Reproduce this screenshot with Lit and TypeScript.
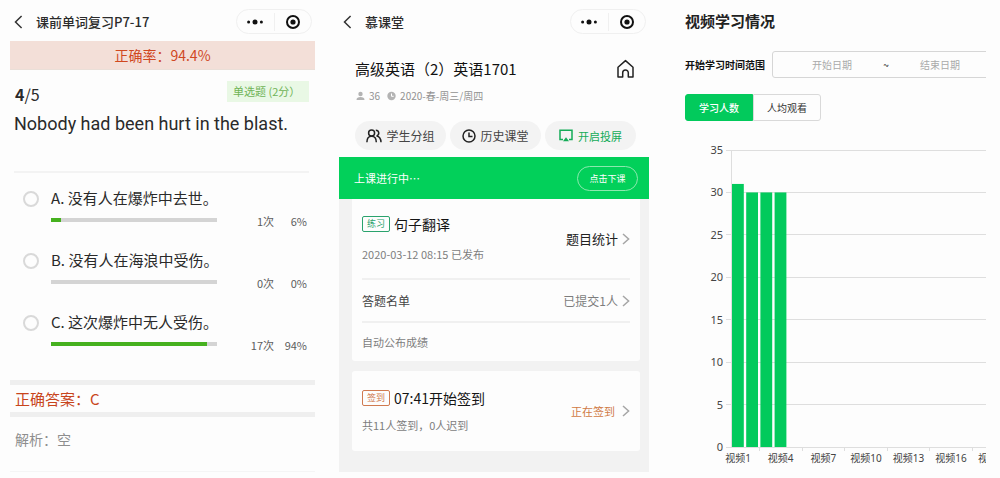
import { LitElement, html, svg, css } from "lit";
import { customElement, state, property } from "lit/decorators.js";
import { classMap } from "lit/directives/class-map.js";
import { styleMap } from "lit/directives/style-map.js";

const chevron = html`<svg class="chevron" width="8" height="12" viewBox="0 0 8 12" aria-hidden="true">
  <path d="M1 1l5.6 5L1 11" fill="none" stroke="#a6a6a6" stroke-width="1.5" />
</svg>`;

@customElement("phone-header")
class PhoneHeader extends LitElement {
  @property() heading = "";

  static styles = css`
    :host {
      display: flex;
      align-items: center;
      box-sizing: border-box;
      height: 41px;
      padding: 2px 3px 0 4px;
    }
    button {
      display: flex;
      align-items: center;
      justify-content: center;
      margin: 0;
      padding: 0;
      border: 0;
      background: none;
    }
    .back {
      width: 9px;
      height: 20px;
    }
    .heading {
      flex: 1;
      margin: 0;
      padding-left: 13px;
      font-size: 13px;
      line-height: 20px;
      font-weight: 500;
      color: #2b2b2b;
      white-space: nowrap;
    }
    .capsule {
      display: grid;
      grid-template-columns: 1fr 1px 1fr;
      align-items: center;
      box-sizing: border-box;
      width: 76px;
      height: 25px;
      border: 1px solid #f0f0f0;
      border-radius: 13px;
    }
    .split {
      height: 18px;
      background: #f0f0f0;
    }
  `;

  render() {
    return html`
      <button class="back" aria-label="返回">
        <svg width="9" height="14" viewBox="0 0 9 14">
          <path d="M7.6 1L1.5 7l6.1 6" fill="none" stroke="#333" stroke-width="1.5" />
        </svg>
      </button>
      <h1 class="heading">${this.heading}</h1>
      <div class="capsule">
        <button aria-label="更多">
          <svg width="18" height="8" viewBox="0 0 18 8" fill="#111">
            <circle cx="2.6" cy="4" r="1.5" />
            <circle cx="9" cy="4" r="2.5" />
            <circle cx="15.4" cy="4" r="1.5" />
          </svg>
        </button>
        <span class="split"></span>
        <button aria-label="关闭">
          <svg width="16" height="16" viewBox="0 0 16 16">
            <circle cx="8" cy="8" r="6" fill="none" stroke="#111" stroke-width="2" />
            <circle cx="8" cy="8" r="2.6" fill="#111" />
          </svg>
        </button>
      </div>
    `;
  }
}

interface Choice {
  key: string;
  text: string;
  count: number;
  percent: number;
}

@customElement("quiz-panel")
class QuizPanel extends LitElement {
  private choices: Choice[] = [
    { key: "A", text: "没有人在爆炸中去世。", count: 1, percent: 6 },
    { key: "B", text: "没有人在海浪中受伤。", count: 0, percent: 0 },
    { key: "C", text: "这次爆炸中无人受伤。", count: 17, percent: 94 },
  ];

  static styles = css`
    :host {
      display: block;
      color: #2a2a2a;
    }
    .rate {
      height: 28px;
      border-bottom: 1px solid #eadfd8;
      background: #f3dfd8;
      color: #d0481f;
      font-size: 14px;
      line-height: 28px;
      text-align: center;
    }
    .question {
      margin: 0 6px 0 4px;
      border-bottom: 2px solid #f3f3f3;
      padding: 11px 0 36px;
    }
    .top {
      display: flex;
      justify-content: space-between;
    }
    .index {
      padding-left: 1px;
      font-size: 16px;
      line-height: 26px;
    }
    .kind {
      box-sizing: border-box;
      width: 82px;
      height: 21px;
      padding-left: 6px;
      background: #e9f8e5;
      color: #6fb356;
      font-size: 11px;
      line-height: 21px;
      white-space: nowrap;
    }
    .sentence {
      margin: 6px 0 0;
      font-family: Roboto, "Noto Sans CJK SC", sans-serif;
      font-size: 18px;
      line-height: 22px;
      white-space: nowrap;
    }
    fieldset {
      margin: 0;
      padding: 14px 8px 7px 13px;
      border: 0;
      min-width: 0;
    }
    .choice {
      display: grid;
      grid-template-columns: 28px minmax(0, 166fr) minmax(0, 90fr);
      grid-template-rows: 22px 20px;
      height: 62px;
    }
    .choice input {
      appearance: none;
      box-sizing: border-box;
      width: 16px;
      height: 16px;
      margin: 4px 0;
      border: 2px solid #d9d9d9;
      border-radius: 50%;
    }
    .choice input:checked {
      border-color: #49ad22;
      background: #49ad22;
    }
    .choice label {
      grid-column: 2 / 4;
      font-size: 15px;
      line-height: 22px;
      white-space: nowrap;
    }
    .track {
      grid-column: 2;
      height: 4px;
      margin-top: 9px;
      background: #d4d4d4;
    }
    .fill {
      height: 100%;
      background: #46b11f;
    }
    .numbers {
      display: grid;
      grid-template-columns: 1fr 33px;
      padding-top: 2px;
      color: #5c5c5c;
      font-size: 11px;
      line-height: 20px;
      text-align: right;
      white-space: nowrap;
    }
    .answer {
      border: solid #efefef;
      border-width: 5px 0;
      padding: 0 5px;
      color: #c8451c;
      font-size: 15px;
      line-height: 27px;
    }
    .analysis {
      border-bottom: 1px solid #f5f5f5;
      padding: 11px 5px 21px;
      color: #8e8e8e;
      font-size: 14px;
      line-height: 22px;
    }
  `;

  render() {
    return html`
      <phone-header heading="课前单词复习P7-17"></phone-header>
      <div class="rate">正确率：94.4%</div>
      <div class="question">
        <div class="top">
          <span class="index"><b>4</b>/5</span>
          <span class="kind">单选题 (2分）</span>
        </div>
        <p class="sentence">Nobody had been hurt in the blast.</p>
      </div>
      <fieldset>
        ${this.choices.map(
          (c) => html`
            <div class="choice">
              <input type="radio" name="answer" id=${"choice-" + c.key} />
              <label for=${"choice-" + c.key}>${c.key}. ${c.text}</label>
              <div class="track">
                <div class="fill" style=${styleMap({ width: c.percent + "%" })}></div>
              </div>
              <div class="numbers"><span>${c.count}次</span><span>${c.percent}%</span></div>
            </div>
          `
        )}
      </fieldset>
      <div class="answer">正确答案：C</div>
      <div class="analysis">解析：空</div>
    `;
  }
}

@customElement("class-panel")
class ClassPanel extends LitElement {
  static styles = css`
    :host {
      display: block;
      color: #222;
      white-space: nowrap;
    }
    button {
      margin: 0;
      padding: 0;
      border: 0;
      background: none;
      color: inherit;
      font-family: inherit;
      white-space: nowrap;
    }
    .course {
      display: flex;
      align-items: center;
      justify-content: space-between;
      margin-top: 16px;
      padding: 0 14px 0 16px;
    }
    .course h2 {
      margin: 0;
      font-size: 15px;
      line-height: 24px;
      font-weight: 400;
      color: #111;
    }
    .home {
      display: flex;
    }
    .meta {
      display: flex;
      align-items: center;
      padding: 7px 16px 0 17px;
      color: #929292;
      font-size: 10px;
      line-height: 16px;
    }
    .meta span {
      margin: 0 7px 0 4px;
    }
    .actions {
      display: grid;
      grid-template-columns: repeat(3, minmax(0, 1fr));
      gap: 4px;
      padding: 17px 13px 7px 16px;
    }
    .action {
      display: flex;
      align-items: center;
      justify-content: center;
      gap: 4px;
      height: 29px;
      border-radius: 15px;
      background: #f3f3f3;
      font-size: 12px;
      color: #444;
    }
    .cast {
      gap: 5px;
      color: #14ac58;
      font-size: 11px;
    }
    .live {
      display: flex;
      align-items: center;
      justify-content: space-between;
      height: 42px;
      padding: 0 11px 0 15px;
      background: #02d05a;
      color: #fff;
      font-size: 11px;
    }
    .live button {
      width: 61px;
      height: 25px;
      border: 1px solid #8be9ae;
      border-radius: 13px;
      font-size: 9px;
    }
    .feed {
      display: grid;
      gap: 10px;
      padding: 0 9px 21px 13px;
      background: #f2f2f2;
    }
    .card {
      padding: 0 10px;
      border-radius: 3px;
      background: #fdfdfd;
    }
    .first {
      border-radius: 0 0 3px 3px;
    }
    .row {
      display: flex;
      align-items: center;
      justify-content: space-between;
    }
    .head {
      height: 79px;
    }
    .title {
      display: flex;
      align-items: center;
      gap: 4px;
      font-size: 14px;
      line-height: 24px;
    }
    .title h3 {
      margin: 0;
      font-size: 14px;
      font-weight: 400;
      color: #151515;
    }
    .tag {
      box-sizing: border-box;
      width: 28px;
      height: 16px;
      border: 1px solid #2aa36d;
      border-radius: 2px;
      color: #2aa36d;
      font-size: 9px;
      line-height: 14px;
      text-align: center;
    }
    .orange {
      border-color: #d07a50;
      color: #d07a50;
    }
    .note {
      margin: 7px 0 0;
      color: #7d7d7d;
      font-size: 11px;
      line-height: 22px;
    }
    .link {
      display: flex;
      align-items: center;
      gap: 4px;
      font-size: 12px;
    }
    .strong {
      font-size: 13px;
    }
    .sub {
      height: 41px;
      border-top: 2px solid #f0f0f0;
      font-size: 12px;
      color: #444;
    }
    .grey {
      color: #7d7d7d;
    }
    .last {
      height: 38px;
      color: #7d7d7d;
      font-size: 11px;
    }
    .sign {
      height: 80px;
    }
    .sign .note {
      margin-top: 4px;
    }
    .signing {
      gap: 7px;
      color: #d07a45;
      font-size: 11px;
    }
  `;

  render() {
    return html`
      <phone-header heading="慕课堂"></phone-header>
      <div class="course">
        <h2>高级英语（2）英语1701</h2>
        <button class="home" aria-label="主页">
          <svg width="19" height="20" viewBox="0 0 19 20">
            <path
              d="M2 8.2L9.5 1.6 17 8.2V18h-4.7v-4.2a2.8 2.8 0 0 0-5.6 0V18H2z"
              fill="none" stroke="#222" stroke-width="1.5" stroke-linejoin="round" />
          </svg>
        </button>
      </div>
      <div class="meta">
        <svg width="9" height="10" viewBox="0 0 9 10" fill="#b3b3b3">
          <circle cx="4.5" cy="3" r="2.2" />
          <path d="M.5 9c0-2.4 1.6-3.1 4-3.1s4 .7 4 3.1z" />
        </svg>
        <span>36</span>
        <svg width="9" height="10" viewBox="0 0 9 10">
          <circle cx="4.5" cy="5" r="4.2" fill="#b3b3b3" />
          <path d="M4.5 2.5V5.3h2.2" fill="none" stroke="#fff" />
        </svg>
        <span>2020-春-周三/周四</span>
      </div>
      <div class="actions">
        <button class="action">
          <svg width="16" height="14" viewBox="0 0 16 14" fill="none" stroke="#222" stroke-width="1.5">
            <circle cx="5.6" cy="4" r="3" />
            <path d="M.9 13.2C.9 9.4 2.7 7.2 5.6 7.2s4.7 2.2 4.7 6" />
            <path d="M9.8 1.2a2.9 2.9 0 0 1 .8 5.7c2.7.5 4.3 2.8 4.4 6.3" />
          </svg>
          学生分组
        </button>
        <button class="action">
          <svg width="14" height="14" viewBox="0 0 14 14" fill="none" stroke="#222" stroke-width="1.5">
            <circle cx="7" cy="7" r="6" />
            <path d="M7 3.5V7.5h3.5" />
          </svg>
          历史课堂
        </button>
        <button class="action cast">
          <svg width="14" height="13" viewBox="0 0 14 13">
            <path d="M4 10.5H1V1.2h12v9.3h-3" fill="none" stroke="#14ac58" stroke-width="1.5" />
            <path d="M7 8.2l3 4.1H4z" fill="#14ac58" />
          </svg>
          开启投屏
        </button>
      </div>
      <div class="live">
        <span>上课进行中…</span>
        <button>点击下课</button>
      </div>
      <div class="feed">
        <section class="card first">
          <div class="row head">
            <div>
              <div class="title"><span class="tag">练习</span><h3>句子翻译</h3></div>
              <p class="note">2020-03-12 08:15 已发布</p>
            </div>
            <button class="link strong">题目统计${chevron}</button>
          </div>
          <div class="row sub">
            <span>答题名单</span>
            <button class="link grey">已提交1人${chevron}</button>
          </div>
          <div class="row sub last">自动公布成绩</div>
        </section>
        <section class="card">
          <div class="row sign">
            <div>
              <div class="title"><span class="tag orange">签到</span><h3>07:41开始签到</h3></div>
              <p class="note">共11人签到，0人迟到</p>
            </div>
            <button class="link signing">正在签到${chevron}</button>
          </div>
        </section>
      </div>
    `;
  }
}

const PLOT = { left: 46, top: 11, width: 284, height: 297, videos: 20, max: 35, step: 5 };

@customElement("video-panel")
class VideoPanel extends LitElement {
  @state() private tab = 0;
  private viewers = [31, 30, 30, 30];

  static styles = css`
    :host {
      display: block;
      overflow: hidden;
      padding-left: 12px;
      color: #222;
      white-space: nowrap;
    }
    h2 {
      margin: 9px 0 0;
      font-size: 15px;
      line-height: 24px;
      font-weight: 700;
    }
    .filter {
      display: flex;
      align-items: center;
      gap: 4px;
      margin-top: 18px;
    }
    .filter label {
      flex: none;
      width: 83px;
      font-size: 10px;
      font-weight: 700;
      color: #111;
    }
    .range {
      display: flex;
      align-items: center;
      flex: none;
      box-sizing: border-box;
      width: 250px;
      height: 27px;
      border: 1px solid #d6d6d6;
      border-radius: 3px;
      padding: 0 10px;
      font-size: 10px;
    }
    .range input {
      width: 98px;
      margin: 0;
      padding: 0;
      border: 0;
      background: none;
      font-family: inherit;
      font-size: 10px;
      line-height: 20px;
      text-align: center;
    }
    .range input::placeholder {
      color: #aaa;
      opacity: 1;
    }
    .range span {
      width: 10px;
      text-align: center;
    }
    .tabs {
      display: flex;
      margin-top: 16px;
    }
    .tab {
      box-sizing: border-box;
      width: 68px;
      height: 27px;
      margin: 0;
      padding: 0;
      border: 1px solid #d9d9d9;
      border-radius: 0 3px 3px 0;
      background: none;
      color: #333;
      font-family: inherit;
      font-size: 10px;
    }
    .tab:first-child {
      border-radius: 3px 0 0 3px;
    }
    .on {
      border-color: #02ca5c;
      background: #02ca5c;
      color: #fff;
      font-weight: 500;
    }
    .chart {
      display: block;
      margin-top: 18px;
    }
    .grid {
      stroke: #dedede;
      shape-rendering: crispEdges;
    }
    .value {
      font-family: "Noto Sans", sans-serif;
      font-size: 11px;
      fill: #444;
      text-anchor: end;
    }
    .name {
      font-family: "Noto Sans", "Noto Sans CJK SC", sans-serif;
      font-size: 10px;
      fill: #444;
      text-anchor: middle;
    }
    .bar {
      fill: #02ca5c;
    }
  `;

  private renderChart() {
    const { left, top, width, height, videos, max, step } = PLOT;
    const band = width / videos;
    const base = top + height;
    const y = (v: number) => base - (v / max) * height;
    const values = Array.from({ length: max / step + 1 }, (_, i) => i * step);
    const named = Array.from({ length: Math.ceil(videos / 3) }, (_, i) => i * 3);
    return html`
      <svg class="chart" width=${left + width} height=${base + 20} role="img" aria-label="视频学习情况">
        ${values.map(
          (v) => svg`
            <line class="grid" x1=${left - 5} x2=${left + width} y1=${y(v)} y2=${y(v)} />
            <text class="value" x=${left - 8} y=${y(v) + 4}>${v}</text>`
        )}
        <line class="grid" x1=${left} x2=${left} y1=${top} y2=${base} />
        ${this.viewers.map(
          (n, i) => svg`
            <rect class="bar" x=${left + i * band + 1} y=${y(n)} width=${band - 2.4} height=${base - y(n)} />`
        )}
        ${named.map(
          (i) => svg`
            <line class="grid" x1=${left + (i + 2) * band} x2=${left + (i + 2) * band} y1=${base} y2=${base + 4} />
            <text class="name" x=${left + (i + 0.5) * band} y=${base + 15}>视频${i + 1}</text>`
        )}
      </svg>
    `;
  }

  render() {
    return html`
      <h2>视频学习情况</h2>
      <div class="filter">
        <label for="from">开始学习时间范围</label>
        <div class="range">
          <input id="from" placeholder="开始日期" />
          <span>~</span>
          <input aria-label="结束日期" placeholder="结束日期" />
        </div>
      </div>
      <div class="tabs">
        ${["学习人数", "人均观看"].map(
          (t, i) => html`
            <button class=${classMap({ tab: true, on: this.tab === i })} @click=${() => (this.tab = i)}>${t}</button>
          `
        )}
      </div>
      ${this.renderChart()}
    `;
  }
}

@customElement("app-root")
class AppRoot extends LitElement {
  static styles = css`
    :host {
      display: grid;
      grid-template-columns: minmax(0, 305fr) minmax(0, 310fr) minmax(0, 313fr);
      align-items: start;
      gap: 24px;
      box-sizing: border-box;
      min-height: 100vh;
      padding: 0 14px 0 10px;
      background: #fdfdfd;
      font-family: "Noto Sans CJK SC", sans-serif;
    }
  `;

  render() {
    return html`
      <quiz-panel></quiz-panel>
      <class-panel></class-panel>
      <video-panel></video-panel>
    `;
  }
}
